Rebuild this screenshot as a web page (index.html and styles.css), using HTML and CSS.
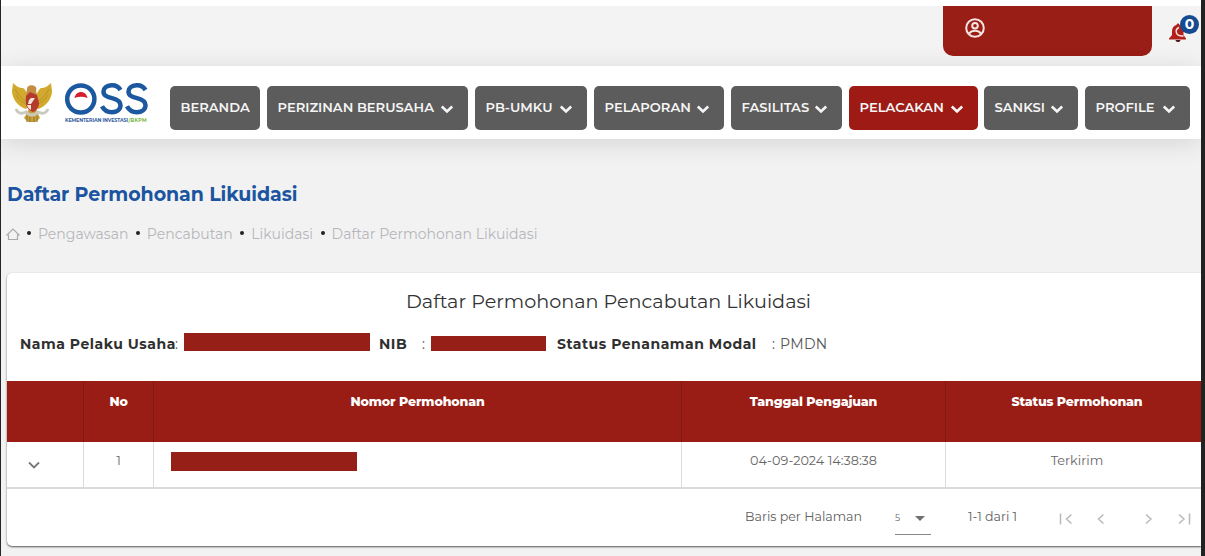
FILE: index.html
```html
<!DOCTYPE html>
<html lang="id">
<head>
<meta charset="utf-8">
<title>Daftar Permohonan Likuidasi</title>
<link rel="stylesheet" href="styles.css">
</head>
<body>
<svg class="defs" width="0" height="0">
  <symbol id="chev" viewBox="0 0 14 14"><path d="M1.800 4.500L7 9.500l5.200-5" fill="none" stroke="currentColor" stroke-width="2.600"/></symbol>
</svg>
<div class="window">
  <header class="topbar">
    <div class="account">
      <svg class="user" viewBox="0 0 20 20"><circle cx="10" cy="10" r="8.800"/><circle cx="10" cy="7.700" r="2.800"/><path d="M4 15.500c3-3.700 9-3.700 12 0"/></svg>
    </div>
    <div class="notif">
      <svg class="bell" viewBox="0 0 20 22"><path d="M9 2.500c.9 0 1.500.6 1.500 1.500 2.900.8 4 3 4 6v4l2.500 3.500v1H0v-1L3 14v-4c0-3 1.500-5.200 4.500-6 0-.9.600-1.500 1.500-1.500z" fill="#b3201c"/><path d="M6.500 19h5c-.5 2.700-4.500 2.700-5 0z" fill="#4a1a1a"/><path d="M10 6.500c-4.500 2-3.500 8 2.500 8.500h2" fill="none" stroke="#fbe9e7" stroke-width="1.400"/></svg>
      <span class="badge">0</span>
    </div>
  </header>
  <nav class="nav">
    <svg class="garuda" viewBox="0 0 40 42">
      <path d="M1 2c3 3 6 5 10 5 2 1 3 4 5 7l3 8-5 6C5 25 0 17 0 10z" fill="#d3a92d"/>
      <path d="M39 2c-3 3-6 5-10 5-2 1-3 4-5 7l-3 8 5 6c9-3 14-11 14-18z" fill="#d3a92d"/>
      <path d="M3 8c3 6 7 10 12 13M4 14c3 5 6 7 10 9M37 8c-3 6-7 10-12 13M36 14c-3 5-6 7-10 9" fill="none" stroke="#b8912a" stroke-width="1"/>
      <path d="M15 8c0-3 3-4.500 6-3.500 3 .5 4 3 3 5l2 10-6 8-7-7z" fill="#c58d43"/>
      <path d="M17 28h7l4 9-4 4h-8l-4-4z" fill="#c9a33a"/>
      <path d="M14 15l4-4 7 3 2 8c0 5-3 8-6 9-3-1-7-4-7-9z" fill="#b43a2b"/>
      <path d="M19 17h4l-4 6h-3l1-4zM15 24h4v5c-2-1-3.500-3-4-5z" fill="#f1e5da"/>
      <path d="M4 28c2 5 6 5 10 3 4 4 8 4 12 0 4 2 8 2 10-3" fill="none" stroke="#c9c9c0" stroke-width="2.800"/>
      <path d="M15 35v6M18 36v5M22 36v5M25 35v6" stroke="#8f7131" stroke-width="1"/>
    </svg>
    <svg class="oss" viewBox="0 0 86 44">
      <g fill="none" stroke="#1c58a0" stroke-width="4.500">
        <circle cx="15.800" cy="18" r="13.600"/>
        <path d="M55.500 9C53 4.800 49.500 4 46.500 4.200c-5 .4-8 2.800-8 6.200 0 4 3 5.300 8.500 6.700 6 1.500 8.500 3.300 8.500 7.200 0 4.500-4 6.900-8.500 6.900-4.500 0-8-2-10-6"/>
        <path d="M80.500 9C78 4.800 74.500 4 71.500 4.200c-5 .4-8 2.800-8 6.200 0 4 3 5.300 8.500 6.700 6 1.500 8.500 3.300 8.500 7.200 0 4.500-4 6.900-8.500 6.900-4.500 0-8-2-10-6"/>
      </g>
      <path d="M9.500 17c1.500-8 11.500-8 13 0-4-1.800-9-1.800-13 0z" fill="#d4202c"/>
      <text class="tag" x="0" y="40.500" textLength="63">KEMENTERIAN INVESTASI</text>
      <text class="tag green" x="63.500" y="40.500" textLength="18">/BKPM</text>
    </svg>
    <ul class="menu">
      <li class="m1"><span>BERANDA</span></li>
      <li class="m2"><span>PERIZINAN BERUSAHA</span><svg><use href="#chev"/></svg></li>
      <li class="m3"><span>PB-UMKU</span><svg><use href="#chev"/></svg></li>
      <li class="m4"><span>PELAPORAN</span><svg><use href="#chev"/></svg></li>
      <li class="m5"><span>FASILITAS</span><svg><use href="#chev"/></svg></li>
      <li class="m6 active"><span>PELACAKAN</span><svg><use href="#chev"/></svg></li>
      <li class="m7"><span>SANKSI</span><svg><use href="#chev"/></svg></li>
      <li class="m8"><span>PROFILE</span><svg><use href="#chev"/></svg></li>
    </ul>
  </nav>
  <main class="content">
    <h1>Daftar Permohonan Likuidasi</h1>
    <div class="crumbs">
      <svg viewBox="0 0 14 14"><path d="M2.500 12.500V8H.8L7 2l6.200 6h-1.700v4.500z" fill="none" stroke="currentColor" stroke-width="1.200"/></svg>
      <i></i><span>Pengawasan</span><i></i><span>Pencabutan</span><i></i><span>Likuidasi</span><i></i><span>Daftar Permohonan Likuidasi</span>
    </div>
    <section class="card">
      <h2>Daftar Permohonan Pencabutan Likuidasi</h2>
      <div class="info">
        <b class="k1">Nama Pelaku Usaha</b><span class="c1">:</span><span class="mask a"></span>
        <b class="k2">NIB</b><span class="c2">:</span><span class="mask b"></span>
        <b class="k3">Status Penanaman Modal</b><span class="c3">:</span><span class="v3">PMDN</span>
      </div>
      <div class="row head"><div></div><div>No</div><div>Nomor Permohonan</div><div>Tanggal Pengajuan</div><div>Status Permohonan</div></div>
      <div class="row body">
        <div class="expand"><svg viewBox="0 0 14 14"><path d="M2 4.500l5 5 5-5" fill="none" stroke="#777" stroke-width="1.800"/></svg></div>
        <div>1</div><div class="num"><span class="mask c"></span></div><div class="date">04-09-2024 14:38:38</div><div class="state">Terkirim</div>
      </div>
      <footer class="pager">
        <span class="per">Baris per Halaman</span>
        <span class="select">5<svg viewBox="0 0 10 5"><path d="M0 0h10L5 5z" fill="#707070"/></svg></span>
        <span class="range">1-1 dari 1</span>
        <svg class="arrows" viewBox="0 0 134 14"><path d="M2.500 1.500v11M13.500 2.500L8.500 7l5 4.500M45.500 2.500L40.500 7l5 4.500M88 2.500L93 7l-5 4.500M121 2.500l5 4.500-5 4.500M131.500 1.500v11" fill="none" stroke="#b9b9b9" stroke-width="1.500"/></svg>
      </footer>
    </section>
  </main>
</div>
</body>
</html>
```
FILE: styles.css
```css
* { box-sizing: border-box; }
body { margin: 0; background: #fff; font-family: Montserrat, Inter, sans-serif; color: #333; overflow: hidden; }
.defs { position: absolute; }
.window { width: 1205px; height: 556px; overflow: hidden; border-left: 1px solid #252525; border-right: 4px solid #222; background: #f2f2f2; display: flex; flex-direction: column; }
.topbar { height: 66px; flex: none; border-top: 6px solid #fff; background: #f3f3f3; display: flex; justify-content: flex-end; }
.account { width: 209px; height: 50px; background: #991e15; border-radius: 0 0 10px 10px; margin-right: 17px; padding: 12px 22px; }
.user { display: block; width: 20px; height: 20px; fill: none; stroke: #f8e4e2; stroke-width: 2; }
.notif { position: relative; width: 32px; padding-top: 15px; }
.bell { display: block; width: 20px; height: 22px; }
.badge { position: absolute; left: 11px; top: 9px; width: 19px; height: 19px; border-radius: 50%; background: #164a91; color: #fff; font-size: 14px; font-weight: 700; line-height: 19px; text-align: center; }
.nav { height: 73px; flex: none; background: #fff; display: flex; align-items: flex-start; box-shadow: 0 4px 26px rgba(0,0,20,.12); padding-left: 10px; position: relative; }
.garuda { width: 40px; height: 42px; margin: 15px 13px 0 1px; flex: none; }
.oss { width: 86px; height: 44px; margin: 15px 0 0 0; flex: none; }
.tag { font-size: 4.800px; font-weight: 700; fill: #3a62a0; }
.green { fill: #78b843; }
.menu { list-style: none; display: flex; gap: 7px; margin: 20px 0 0 19px; padding: 0; }
.menu li { height: 44px; border-radius: 5px; background: #5c5c5c; color: #f5f5f5; display: flex; align-items: center; justify-content: space-between; padding: 0 14.500px 2px 10.500px; font-size: 13.100px; font-weight: 600; white-space: nowrap; }
.menu svg { width: 14px; height: 14px; margin-top: 4px; flex: none; }
.menu li.active { background: #9e1b15; }
.m1 { width: 90px; } .m2 { width: 201px; } .m3 { width: 112px; } .m4 { width: 130px; } .m5 { width: 111px; } .menu .m6 { width: 129px; } .m7 { width: 94px; margin-left: -1px; } .m8 { width: 105px; }
.content { padding: 44px 0 0 6px; }
h1 { margin: 0; font-size: 19px; line-height: 24px; font-weight: 700; letter-spacing: -.06px; color: #1b54a0; white-space: nowrap; }
.crumbs { display: flex; align-items: center; height: 20px; margin-top: 17px; font-size: 14px; color: #b6b6bb; white-space: nowrap; }
.crumbs svg { width: 14px; height: 14px; margin-right: 6px; margin-left: -1px; color: #aaa; }
.crumbs i { width: 4px; height: 4px; border-radius: 50%; background: #222; margin: -2px 7px 0 1px; }
.crumbs span { margin-right: 6.500px; }
.card { margin-top: 29px; height: 273px; background: #fff; border-radius: 5px 0 0 5px; box-shadow: 0 1px 2px rgba(0,0,0,.65); }
h2 { margin: 0; padding: 16px 0 0 9px; font-size: 19.200px; line-height: 24px; font-weight: 400; text-align: center; color: #333; }
.info { display: flex; align-items: center; height: 20px; margin-top: 20px; padding-left: 13px; font-size: 14px; white-space: nowrap; color: #555; letter-spacing: .3px; }
.info > b, .info > .c1, .info > .c2, .info > .c3, .info > .v3 { padding-top: 1px; }
.info b { font-weight: 700; color: #303030; letter-spacing: .52px; }
.mask { display: block; background: #962018; flex: none; }
.a { width: 186px; height: 18px; margin: -3px 9px 0 0; }
.b { width: 115px; height: 15px; margin-right: 11px; }
.k1 { width: 155px; } .c1 { width: 8px; margin-right: 1px; } .k2 { width: 43px; } .c2 { width: 9px; } .k3 { width: 215px; } .c3 { width: 8px; }
.row { display: grid; grid-template-columns: 76px 70px 528px 264px 1fr; text-align: center; font-size: 12.800px; }
.row > div + div { border-left: 1px solid rgba(0,0,0,.14); padding-top: 10px; line-height: 18px; }
.row > div:last-child { padding-left: 7px; }
.head { margin-top: 28px; height: 61px; background: #991d14; color: #fff; font-weight: 800; font-size: 12.600px; letter-spacing: -.15px; }
.head.row > div + div { padding-top: 12px; }
.body { height: 47px; border-bottom: 2px solid #dadada; color: #666; }
.expand svg { display: block; width: 14px; height: 14px; margin: 16px 0 0 20px; }
.c { width: 186px; height: 19px; margin: 0 0 0 17px; }
.pager { height: 57px; display: flex; align-items: flex-start; padding: 19px 9px 0 738px; font-size: 12.600px; line-height: 18px; color: #606060; white-space: nowrap; }
.per { width: 150px; flex: none; }
.select { width: 36px; height: 27px; margin-right: 37px; border-bottom: 1px solid #888; font-size: 9px; line-height: 19px; display: flex; flex: none; justify-content: space-between; padding-right: 6px; }
.select svg { width: 10px; height: 5px; margin-top: 8px; }
.range { width: 90px; flex: none; }
.arrows { width: 134px; height: 14px; flex: none; margin-top: 4px; }
```
